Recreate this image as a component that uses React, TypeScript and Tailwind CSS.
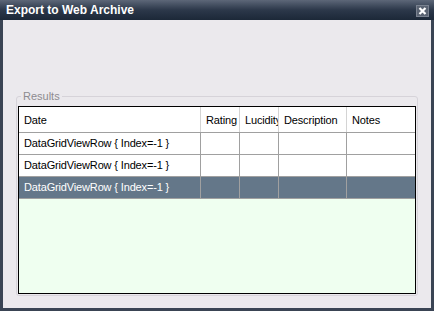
import React from "react";

const cols = [
  { name: "Date", w: "w-[182px]" },
  { name: "Rating", w: "w-[39px]" },
  { name: "Lucidity", w: "w-[39px]" },
  { name: "Description", w: "w-[68px]" },
  { name: "Notes", w: "flex-1" },
];

function Row({ selected }: { selected?: boolean }) {
  return (
    <div
      className={`flex h-[22px] border-b border-[#a0a0a0] ${
        selected ? "bg-[#647789] text-white" : "bg-white text-black"
      }`}
    >
      {cols.map((c, i) => (
        <div
          key={c.name}
          className={`${c.w} shrink-0 ${i < cols.length - 1 ? "border-r border-[#a0a0a0]" : ""} flex items-center pl-[5px] overflow-hidden whitespace-nowrap`}
        >
          {i === 0 ? "DataGridViewRow { Index=-1 }" : ""}
        </div>
      ))}
    </div>
  );
}

export default function App() {
  return (
    <div
      className="w-[434px] h-[311px] flex flex-col bg-[#3a4454] overflow-hidden"
      style={{ fontFamily: '"Liberation Sans", Arial, sans-serif' }}
    >
      <div className="h-[20px] shrink-0 flex items-center justify-between bg-gradient-to-b from-[#5d6778] via-[#2c384a] to-[#1c2838] pl-[6px] pr-[5px]">
        <span className="text-white font-bold text-[12px] leading-none">
          Export to Web Archive
        </span>
        <div className="w-[13px] h-[12px] bg-[#5a6372] border border-[#7a8290] flex items-center justify-center mt-[2px]">
          <svg width="9" height="8" viewBox="0 0 9 8">
            <path d="M1.5 1 L7.5 7 M7.5 1 L1.5 7" stroke="white" strokeWidth="2.2" />
          </svg>
        </div>
      </div>
      <div className="flex-1 flex flex-col mx-[3px] mb-[3px] bg-[#ebe9ed] pt-[76px] px-[13px] pb-[12px]">
        <div className="relative flex-1 flex flex-col border border-[#d6d3d9] rounded-[3px] pt-[9px] px-[1px] pb-[1px]">
          <span className="absolute left-[4px] top-[-7px] px-[2px] bg-[#ebe9ed] text-[11px] leading-[12px] text-[#8d8b90]">
            Results
          </span>
          <div className="flex-1 flex flex-col border border-black bg-[#effff0] text-[11px] tracking-[-0.15px]">
            <div className="flex h-[26px] bg-white border-b border-[#a0a0a0]">
              {cols.map((c, i) => (
                <div
                  key={c.name}
                  className={`${c.w} shrink-0 ${i < cols.length - 1 ? "border-r border-[#d4d4d4]" : ""} flex items-center pl-[5px] pt-[2px] overflow-hidden whitespace-nowrap`}
                >
                  {c.name}
                </div>
              ))}
            </div>
            <Row />
            <Row />
            <Row selected />
          </div>
        </div>
      </div>
    </div>
  );
}
